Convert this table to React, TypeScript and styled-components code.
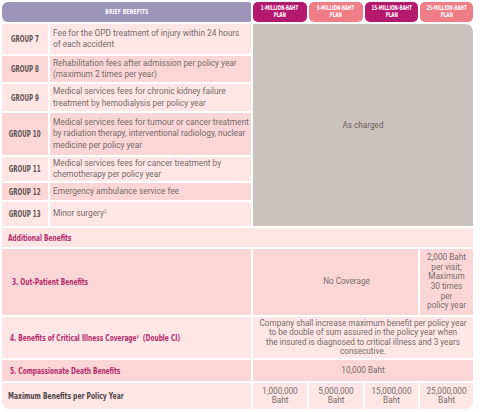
import React from "react";
import styled, { createGlobalStyle } from "styled-components";

const Global = createGlobalStyle`
  html, body { margin: 0; padding: 0; background: #ffffff; }
  body { font-family: Roboto, "Liberation Sans", sans-serif; }
`;

const LIGHT = "#fde6e5";
const DARK = "#fbd6d6";
const BODY_TEXT = "#776b6b";
const PINK_TEXT = "#b32b6c";

const Table = styled.div`
  display: grid;
  grid-template-columns: 46px 201px 54px 54px 53px 53px;
  grid-template-rows: 20px 30px 26px 27px 42px 24px 17px 24px 19px 66px 41px 21px 26px;
  gap: 2px;
  margin: 2px 0 0 2px;
  width: 471px;
`;

const Cond = styled.span<{ $origin?: string; $scale?: number }>`
  display: inline-block;
  font-family: "DejaVu Sans Condensed", "DejaVu Sans", sans-serif;
  font-weight: 700;
  white-space: nowrap;
  transform: scaleX(${(p) => p.$scale ?? 0.72});
  transform-origin: ${(p) => p.$origin ?? "center"} center;
`;

const BriefHead = styled.div`
  grid-column: 1 / 3;
  background: #9d95ba;
  border-radius: 6px 2px 2px 6px;
  color: #ffffff;
  font-size: 7px;
  letter-spacing: 0.2px;
  display: flex;
  align-items: center;
  justify-content: center;
`;

const PlanHead = styled.div<{ $bg: string }>`
  background: ${(p) => p.$bg};
  border-radius: 5px;
  color: #ffffff;
  font-size: 6.6px;
  line-height: 7.5px;
  display: flex;
  flex-direction: column;
  align-items: center;
  justify-content: center;
  text-align: center;
`;

const GroupLabel = styled.div<{ $bg: string }>`
  background: ${(p) => p.$bg};
  color: #5e5252;
  font-size: 8.8px;
  display: flex;
  align-items: center;
  justify-content: center;
`;

const Desc = styled.div<{ $bg: string }>`
  background: ${(p) => p.$bg};
  color: ${BODY_TEXT};
  font-size: 8.3px;
  line-height: 11.5px;
  display: flex;
  align-items: center;
  padding: 0 0 0 3px;
`;

const Charged = styled.div`
  grid-column: 3 / 7;
  grid-row: 2 / 9;
  background: #c9c2bf;
  border-radius: 0 8px 0 0;
  color: #6b6060;
  font-size: 8.2px;
  display: flex;
  align-items: center;
  justify-content: center;
`;

const SectionRow = styled.div`
  grid-column: 1 / -1;
  background: ${LIGHT};
  color: ${PINK_TEXT};
  font-size: 8.6px;
  display: flex;
  align-items: center;
  padding-left: 6px;
`;

const BenefitLabel = styled.div<{ $bg: string; $pad: number; $color?: string; $round?: boolean }>`
  grid-column: 1 / 3;
  background: ${(p) => p.$bg};
  color: ${(p) => p.$color ?? PINK_TEXT};
  font-size: 8.4px;
  display: flex;
  align-items: center;
  padding-left: ${(p) => p.$pad}px;
  border-radius: ${(p) => (p.$round ? "0 0 0 7px" : "0")};
`;

const Value = styled.div<{ $bg: string; $span?: string; $lh?: number; $shift?: number; $round?: boolean }>`
  grid-column: ${(p) => p.$span ?? "auto"};
  background: ${(p) => p.$bg};
  color: ${BODY_TEXT};
  font-size: 8.2px;
  line-height: ${(p) => p.$lh ?? 9.5}px;
  display: flex;
  align-items: center;
  justify-content: center;
  text-align: center;
  white-space: nowrap;
  padding: 0 0 0 ${(p) => p.$shift ?? 0}px;
  border-radius: ${(p) => (p.$round ? "0 0 7px 0" : "0")};
`;

const Sup = styled.sup`
  font-size: 4.5px;
  vertical-align: 3px;
  line-height: 0;
`;

const plans = [
  { name: "1-MILLION-BAHT", bg: "#b5196e" },
  { name: "5-MILLION-BAHT", bg: "#ef7d88" },
  { name: "15-MILLION-BAHT", bg: "#b5196e" },
  { name: "25-MILLION-BAHT", bg: "#ef7d88" },
];

const groups: { g: string; text: React.ReactNode }[] = [
  {
    g: "GROUP 7",
    text: (
      <span>
        Fee for the OPD treatment of injury within 24 hours
        <br />
        of each accident
      </span>
    ),
  },
  { g: "GROUP 8", text: "Rehabilitation fees after admission per policy year (maximum 2 times per year)" },
  { g: "GROUP 9", text: "Medical services fees for chronic kidney failure treatment by hemodialysis per policy year" },
  {
    g: "GROUP 10",
    text: "Medical services fees for tumour or cancer treatment by radiation therapy, interventional radiology, nuclear medicine per policy year",
  },
  { g: "GROUP 11", text: "Medical services fees for cancer treatment by chemotherapy per policy year" },
  { g: "GROUP 12", text: "Emergency ambulance service fee" },
  {
    g: "GROUP 13",
    text: (
      <span>
        Minor surgery<Sup>2</Sup>
      </span>
    ),
  },
];

const maxes = ["1,000,000", "5,000,000", "15,000,000", "25,000,000"];

export default function App() {
  return (
    <>
      <Global />
      <Table>
        <BriefHead>
          <Cond>BRIEF BENEFITS</Cond>
        </BriefHead>
        {plans.map((p) => (
          <PlanHead key={p.name} $bg={p.bg}>
            <Cond $scale={0.68}>{p.name}</Cond>
            <Cond $scale={0.68}>PLAN</Cond>
          </PlanHead>
        ))}

        <Charged>As charged</Charged>

        {groups.map((row, i) => {
          const bg = i % 2 === 0 ? LIGHT : DARK;
          return (
            <React.Fragment key={row.g}>
              <GroupLabel $bg={bg}>
                <Cond $scale={0.7}>{row.g}</Cond>
              </GroupLabel>
              <Desc $bg={bg}>
                <span>{row.text}</span>
              </Desc>
            </React.Fragment>
          );
        })}

        <SectionRow>
          <Cond $origin="left" $scale={0.76}>Additional Benefits</Cond>
        </SectionRow>

        <BenefitLabel $bg={DARK} $pad={10}>
          <Cond $origin="left" $scale={0.78}>3. Out-Patient Benefits</Cond>
        </BenefitLabel>
        <Value $bg={DARK} $span="3 / 6" $shift={22}>
          No Coverage
        </Value>
        <Value $bg={DARK} $lh={9.6}>
          2,000 Baht
          <br />
          per visit;
          <br />
          Maximum
          <br />
          30 times
          <br />
          per
          <br />
          policy year
        </Value>

        <BenefitLabel $bg={LIGHT} $pad={8}>
          <Cond $origin="left" $scale={0.78}>
            4. Benefits of Critical Illness Coverage<Sup>3</Sup>&nbsp;&nbsp;(Double CI)
          </Cond>
        </BenefitLabel>
        <Value $bg={LIGHT} $span="3 / 7" $lh={9.2}>
          Company shall increase maximum benefit per policy year
          <br />
          to be double of sum assured in the policy year when
          <br />
          the insured is diagnosed to critical illness and 3 years
          <br />
          consecutive.
        </Value>

        <BenefitLabel $bg={DARK} $pad={8}>
          <Cond $origin="left" $scale={0.78}>5. Compassionate Death Benefits</Cond>
        </BenefitLabel>
        <Value $bg={DARK} $span="3 / 7">
          10,000 Baht
        </Value>

        <BenefitLabel $bg={LIGHT} $pad={6} $color="#4f4545" $round>
          <Cond $origin="left" $scale={0.8}>Maximum Benefits per Policy Year</Cond>
        </BenefitLabel>
        {maxes.map((m, i) => (
          <Value key={m} $bg={LIGHT} $round={i === 3}>
            {m}
            <br />
            Baht
          </Value>
        ))}
      </Table>
    </>
  );
}
